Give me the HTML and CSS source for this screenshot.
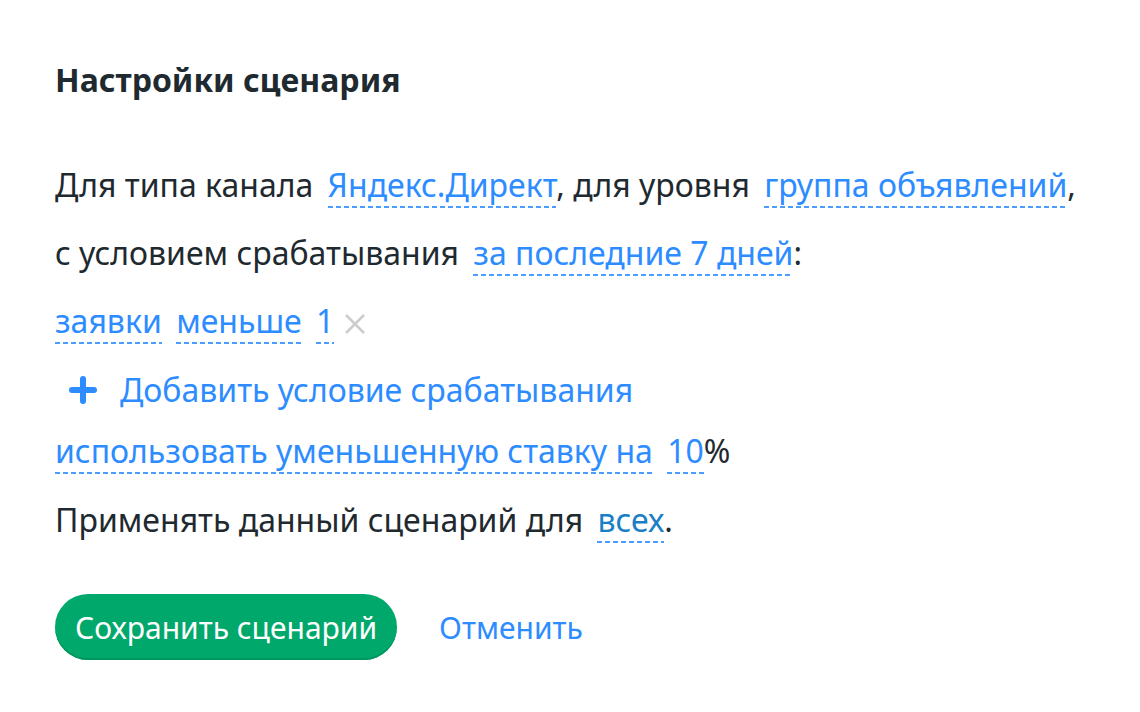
FILE: index.html
```html
<!DOCTYPE html>
<html lang="ru">
<head>
    <meta charset="UTF-8">
    <meta name="viewport" content="width=device-width, initial-scale=1.0">
    <title>Настройки сценария</title>
    <link rel="stylesheet" href="styles.css">
</head>
<body>

    <div class="scenario">
        <h1 class="scenario-title">Настройки сценария</h1>

        <!-- Описание сценария -->
        <div class="line">
            Для типа канала <a class="dash" href="#">Яндекс.Директ</a>, для уровня <a class="dash" href="#">группа объявлений</a>,
        </div>
        <div class="line">
            с условием срабатывания <a class="dash" href="#">за последние 7 дней</a>:
        </div>
        <div class="line">
            <a class="dash start" href="#">заявки</a> <a class="dash" href="#">меньше</a> <a class="dash" href="#">1</a>
            <svg class="remove" width="20" height="20" viewBox="0 0 20 20">
                <path d="M1 1l18 18M19 1L1 19" stroke="#cccccc" stroke-width="2.5" fill="none"/>
            </svg>
        </div>
        <div class="line line-add">
            <a class="add" href="#">
                <svg class="add-icon" width="30" height="30" viewBox="0 0 30 30">
                    <path d="M15 4v22M4 15h22" stroke="#2d8cff" stroke-width="6" stroke-linecap="round" fill="none"/>
                </svg>
                Добавить условие срабатывания
            </a>
        </div>
        <div class="line line-rate">
            <a class="dash start" href="#">использовать уменьшенную ставку на</a> <a class="dash" href="#">10</a>%
        </div>
        <div class="line">
            Применять данный сценарий для <a class="dash dark" href="#">всех</a>.
        </div>

        <!-- Кнопки -->
        <div class="actions">
            <button class="btn-save" type="button">Сохранить сценарий</button>
            <a class="cancel" href="#">Отменить</a>
        </div>
    </div>

</body>
</html>
```

FILE: styles.css
```css
body {
    margin: 0;
    font-family: "Noto Sans", "Open Sans", sans-serif;
    color: #1f2a30;
    background: #fff;
}
.scenario {
    padding: 54px 55px;
}
.scenario-title {
    margin: 0 0 45px;
    font-size: 32px;
    font-weight: 700;
    line-height: 52px;
}
.line {
    font-size: 32px;
    line-height: 68px;
    white-space: nowrap;
}
.line-add {
    line-height: 70px;
}
.line-rate {
    line-height: 46px;
    margin-bottom: 12px;
}
a {
    color: #2d8cff;
    text-decoration: none;
}
.dash {
    margin-left: 6px;
    padding-bottom: 2px;
    background-image: linear-gradient(to right, #4a9cff 62%, transparent 0);
    background-size: 8px 2px;
    background-repeat: repeat-x;
    background-position: 0 100%;
}
.dash.start {
    margin-left: 0;
}
.dash.dark {
    color: #1a7fc7;
}
.remove {
    margin-left: 2px;
    vertical-align: -1px;
}
.add {
    display: inline-flex;
    align-items: center;
    gap: 22px;
    padding-left: 13px;
}
.add-icon {
    flex-shrink: 0;
}
.actions {
    display: flex;
    align-items: center;
    gap: 42px;
    margin-top: 40px;
}
.btn-save {
    height: 66px;
    padding: 0 20px;
    border: none;
    border-radius: 33px;
    background-color: #00a86b;
    box-shadow: inset 0 -2px 0 #009660;
    color: #fff;
    font-family: inherit;
    font-size: 30px;
    cursor: pointer;
}
.cancel {
    font-size: 30px;
}
```
